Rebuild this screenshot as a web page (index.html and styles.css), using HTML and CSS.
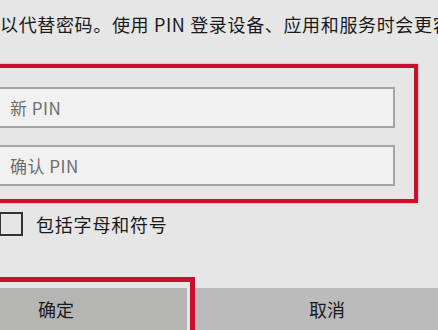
FILE: index.html
```html
<!DOCTYPE html>
<html lang="zh-CN">
<head>
    <meta charset="UTF-8">
    <meta name="viewport" content="width=device-width, initial-scale=1.0">
    <title>设置 PIN</title>
    <link rel="stylesheet" href="styles.css">
</head>
<body>
    <div class="dialog">
        <p class="desc">以代替密码。使用 PIN 登录设备、应用和服务时会更容易。</p>
        <div class="pin-group">
            <input class="pin-input" type="password" placeholder="新 PIN">
            <input class="pin-input" type="password" placeholder="确认 PIN">
        </div>
        <label class="check-row">
            <span class="check-box"></span>
            <span>包括字母和符号</span>
        </label>
        <div class="actions">
            <div class="focus-ring">
                <button class="btn btn-ok">确定</button>
            </div>
            <button class="btn btn-cancel">取消</button>
        </div>
    </div>
</body>
</html>
```

FILE: styles.css
```css
html, body { margin: 0; height: 100%; overflow: hidden; }
body { background: #e6e6e6; font-family: "Noto Sans CJK SC", "Noto Sans", sans-serif; color: #1a1a1a; }
.dialog { width: 438px; }
.desc { margin: 0; padding-top: 12px; font-size: 18px; line-height: 24px; letter-spacing: 0.65px; white-space: nowrap; overflow: hidden; }
.pin-group { margin: 28px 0 0 -20px; width: 438px; box-sizing: border-box; border: 4px solid #c8102e; padding: 19px 19px 13px 0; display: flex; flex-direction: column; gap: 17px; box-shadow: 0 0 2px rgba(220, 60, 80, 0.5); }
.pin-input { height: 41px; box-sizing: border-box; border: 2px solid #a4a4a4; background: #f1f1f1; padding: 0 0 0 24px; font-family: inherit; font-size: 17px; letter-spacing: 0.5px; color: #333; outline: none; }
.pin-input::placeholder { color: #6e6e6e; }
.check-row { display: flex; align-items: center; gap: 13px; margin-top: 9px; font-size: 18px; line-height: 24px; letter-spacing: 0.8px; }
.check-box { width: 24px; height: 24px; box-sizing: border-box; border: 2px solid #333; margin-left: -1px; }
.actions { display: flex; align-items: flex-end; margin: 41px 0 0 -80px; }
.focus-ring { flex-shrink: 0; border: 5px solid #c8102e; border-bottom: none; padding: 6px 3px 0 0; }
.btn { flex-shrink: 0; height: 48px; border: none; font-family: inherit; font-size: 18px; color: #1a1a1a; padding: 0 0 6px; }
.btn-ok { width: 262px; background: #b5b5b3; }
.btn-cancel { width: 264px; background: #bbbbbb; }
```
